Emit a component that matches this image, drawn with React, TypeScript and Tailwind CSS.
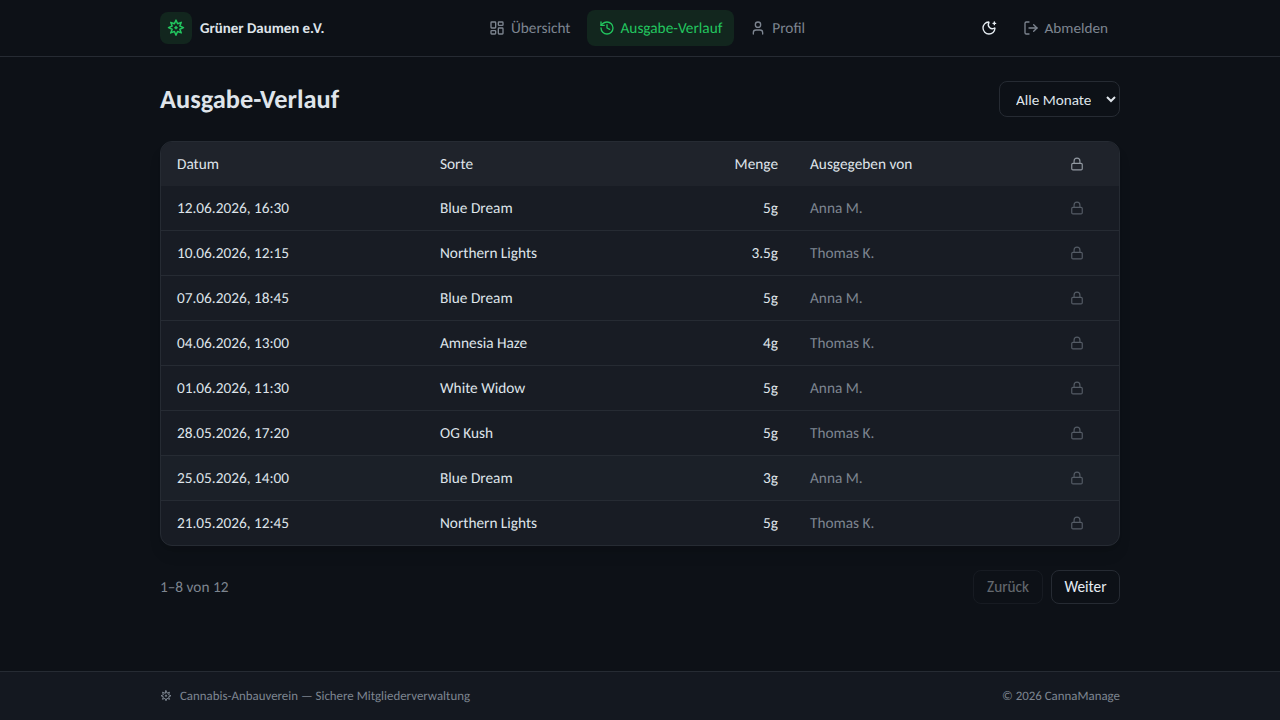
import { History, LayoutDashboard, Lock, LogOut, MoonStar, User } from "lucide-react";

const rows = [
  ["12.06.2026, 16:30", "Blue Dream", "5g", "Anna M."],
  ["10.06.2026, 12:15", "Northern Lights", "3.5g", "Thomas K."],
  ["07.06.2026, 18:45", "Blue Dream", "5g", "Anna M."],
  ["04.06.2026, 13:00", "Amnesia Haze", "4g", "Thomas K."],
  ["01.06.2026, 11:30", "White Widow", "5g", "Anna M."],
  ["28.05.2026, 17:20", "OG Kush", "5g", "Thomas K."],
  ["25.05.2026, 14:00", "Blue Dream", "3g", "Anna M."],
  ["21.05.2026, 12:45", "Northern Lights", "5g", "Thomas K."],
];

function Leaf({ size, className }: { size: number; className?: string }) {
  return (
    <svg width={size} height={size} viewBox="0 0 24 24" fill="none" stroke="currentColor" strokeWidth="2" strokeLinejoin="round" strokeLinecap="round" className={className}>
      <path d="M12 1.5 14.1 6.4 19.07 4.43 17.1 9.4 22 11.5 17.1 13.6 19.07 18.57 14.1 16.6 12 21.5 9.9 16.6 4.93 18.57 6.9 13.6 2 11.5 6.9 9.4 4.93 4.43 9.9 6.4Z" />
      <path d="M12 10v3M10.5 11.5h3" />
    </svg>
  );
}

export default function App() {
  return (
    <div className="min-h-screen flex flex-col bg-[#0d1117] text-[#e6edf3] font-['Carlito','Lato',sans-serif] text-[15.3px] leading-6 [text-rendering:geometricPrecision]">
      <header className="h-[57px] border-b border-[#262b33] bg-[#0d1117]">
        <div className="w-[960px] mx-auto h-14 flex items-center justify-between">
          <div className="flex items-center gap-2 w-[317px]">
            <div className="w-8 h-8 rounded-lg bg-[#12261e] flex items-center justify-center">
              <Leaf size={18} className="text-[#22c55e]" />
            </div>
            <span className="font-bold text-[14.9px] text-[#dfe4ea] pt-[2px]">Grüner Daumen e.V.</span>
          </div>
          <nav className="flex items-center gap-1">
            <a className="flex items-center gap-1.5 px-3 h-9 rounded-lg text-[#7d8590]">
              <LayoutDashboard size={16} /> <span className="pt-[2px]">Übersicht</span>
            </a>
            <a className="flex items-center gap-1.5 px-3 h-9 rounded-lg bg-[#12261e] text-[#22c55e]">
              <History size={16} /> <span className="pt-[2px]">Ausgabe-Verlauf</span>
            </a>
            <a className="flex items-center gap-1.5 px-3 h-9 rounded-lg text-[#7d8590]">
              <User size={16} /> <span className="pt-[2px]">Profil</span>
            </a>
          </nav>
          <div className="flex items-center justify-end gap-1 w-[303px]">
            <button className="w-9 h-9 flex items-center justify-center text-[#e6edf3]">
              <MoonStar size={16} />
            </button>
            <button className="flex items-center gap-1.5 px-3 h-9 text-[15.2px] text-[#7d8590]">
              <LogOut size={16} /> <span>Abmelden</span>
            </button>
          </div>
        </div>
      </header>

      <main className="flex-1 w-[960px] mx-auto pt-6">
        <div className="flex items-center justify-between mb-6 h-9">
          <h1 className="text-[26.4px] leading-9 font-bold text-[#dfe4ea] pt-[2px]">Ausgabe-Verlauf</h1>
          <select className="h-9 w-[121px] px-3 pt-[2px] rounded-lg border border-[#262b33] bg-[#0d1117] text-[15.2px] text-[#dfe4ea]">
            <option>Alle Monate</option>
          </select>
        </div>

        <div className="rounded-xl border border-[#262b33] bg-[#181c24] overflow-hidden shadow-lg text-[#dfe4ea]">
          <table className="w-full table-fixed border-separate border-spacing-0">
            <colgroup>
              <col className="w-[263px]" />
              <col className="w-[240px]" />
              <col className="w-[130px]" />
              <col className="w-[260px]" />
              <col className="w-[65px]" />
            </colgroup>
            <thead>
              <tr className="h-11 bg-[#1f232b]">
                <th className="px-4 pt-[2px] text-left font-normal">Datum</th>
                <th className="px-4 pt-[2px] text-left font-normal">Sorte</th>
                <th className="px-4 pt-[2px] text-right font-normal">Menge</th>
                <th className="px-4 pt-[2px] text-left font-normal">Ausgegeben von</th>
                <th className="px-4 text-left font-normal"><Lock size={14} className="text-[#9198a1]" /></th>
              </tr>
            </thead>
            <tbody>
              {rows.map((r, i) => {
                const rowClass = i === 6 ? "bg-[#1b2028]" : "";
                const cell = i === rows.length - 1 ? "h-11 px-4" : "h-[45px] px-4 border-b border-[#262b33]";
                return (
                  <tr key={i} className={rowClass}>
                    <td className={`${cell} pt-[2px]`}>{r[0]}</td>
                    <td className={`${cell} pt-[2px]`}>{r[1]}</td>
                    <td className={`${cell} pt-[2px] text-right`}>{r[2]}</td>
                    <td className={`${cell} pt-[2px] text-[#7d8590]`}>{r[3]}</td>
                    <td className={cell}><Lock size={14} className="text-[#545b65]" /></td>
                  </tr>
                );
              })}
            </tbody>
          </table>
        </div>

        <div className="mt-6 flex items-center justify-between">
          <span className="text-[#7d8590] pt-[2px]">1–8 von 12</span>
          <div className="flex gap-2">
            <button className="h-[34px] w-[70px] flex items-center justify-center rounded-lg border border-[#262b33] text-[#e6edf3] opacity-40">Zurück</button>
            <button className="h-[34px] w-[69px] flex items-center justify-center rounded-lg border border-[#262b33] text-[#e6edf3]">Weiter</button>
          </div>
        </div>
      </main>

      <footer className="h-[49px] border-t border-[#262b33] bg-[#141820]">
        <div className="w-[960px] mx-auto h-12 flex items-center justify-between text-[12.9px] text-[#7d8590]">
          <span className="flex items-center gap-2"><Leaf size={12} /> <span className="pt-[2px]">Cannabis-Anbauverein — Sichere Mitgliederverwaltung</span></span>
          <span className="pt-[2px]">© 2026 CannaManage</span>
        </div>
      </footer>
    </div>
  );
}
